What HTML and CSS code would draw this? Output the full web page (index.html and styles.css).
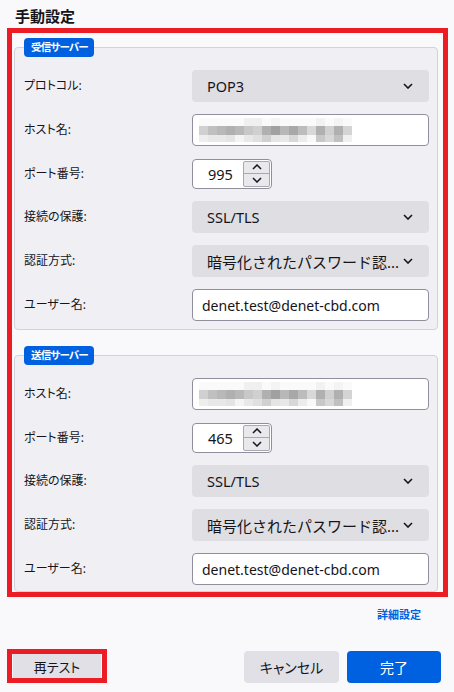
FILE: index.html
```html
<!DOCTYPE html>
<html lang="ja">
<head>
<meta charset="utf-8">
<title>手動設定</title>
<link rel="stylesheet" href="styles.css">
</head>
<body>
<div class="title">手動設定</div>
<div class="annot">
  <section class="group">
    <div class="legend">受信サーバー</div>
    <div class="rows">
      <div class="label">プロトコル:</div>
      <div class="select"><span>POP3</span><svg class="chev" width="10" height="6" viewBox="0 0 10 6"><polyline points="1,1 5,5 9,1" fill="none" stroke="#15141a" stroke-width="1.6"/></svg></div>
      <div class="label">ホスト名:</div>
      <div class="input"><div class="mosaic"></div></div>
      <div class="label">ポート番号:</div>
      <div class="portrow"><div class="port"><span class="num">995</span><div class="spin"><div class="sbtn"><svg width="10" height="6" viewBox="0 0 10 6"><polyline points="1,5 5,1 9,5" fill="none" stroke="#15141a" stroke-width="1.5"/></svg></div><div class="sbtn"><svg width="10" height="6" viewBox="0 0 10 6"><polyline points="1,1 5,5 9,1" fill="none" stroke="#15141a" stroke-width="1.5"/></svg></div></div></div></div>
      <div class="label">接続の保護:</div>
      <div class="select"><span>SSL/TLS</span><svg class="chev" width="10" height="6" viewBox="0 0 10 6"><polyline points="1,1 5,5 9,1" fill="none" stroke="#15141a" stroke-width="1.6"/></svg></div>
      <div class="label">認証方式:</div>
      <div class="select"><span class="jp">暗号化されたパスワード認...</span><svg class="chev" width="10" height="6" viewBox="0 0 10 6"><polyline points="1,1 5,5 9,1" fill="none" stroke="#15141a" stroke-width="1.6"/></svg></div>
      <div class="label">ユーザー名:</div>
      <div class="input"><span class="val">denet.test@denet-cbd.com</span></div>
    </div>
  </section>
  <section class="group group2">
    <div class="legend">送信サーバー</div>
    <div class="rows">
      <div class="label">ホスト名:</div>
      <div class="input"><div class="mosaic"></div></div>
      <div class="label">ポート番号:</div>
      <div class="portrow"><div class="port"><span class="num">465</span><div class="spin"><div class="sbtn"><svg width="10" height="6" viewBox="0 0 10 6"><polyline points="1,5 5,1 9,5" fill="none" stroke="#15141a" stroke-width="1.5"/></svg></div><div class="sbtn"><svg width="10" height="6" viewBox="0 0 10 6"><polyline points="1,1 5,5 9,1" fill="none" stroke="#15141a" stroke-width="1.5"/></svg></div></div></div></div>
      <div class="label">接続の保護:</div>
      <div class="select"><span>SSL/TLS</span><svg class="chev" width="10" height="6" viewBox="0 0 10 6"><polyline points="1,1 5,5 9,1" fill="none" stroke="#15141a" stroke-width="1.6"/></svg></div>
      <div class="label">認証方式:</div>
      <div class="select"><span class="jp">暗号化されたパスワード認...</span><svg class="chev" width="10" height="6" viewBox="0 0 10 6"><polyline points="1,1 5,5 9,1" fill="none" stroke="#15141a" stroke-width="1.6"/></svg></div>
      <div class="label">ユーザー名:</div>
      <div class="input"><span class="val">denet.test@denet-cbd.com</span></div>
    </div>
  </section>
</div>
<div class="adv"><a class="link">詳細設定</a></div>
<div class="footer">
  <div class="annot-btn"><div class="btn retest">再テスト</div></div>
  <div class="spacer"></div>
  <div class="btn cancel">キャンセル</div>
  <div class="btn primary">完了</div>
</div>
</body>
</html>
```
FILE: styles.css
```css
* { box-sizing: border-box; }
html, body { margin: 0; padding: 0; }
body {
  width: 454px;
  height: 692px;
  background: #f9f9fb;
  font-family: "Noto Sans", "Noto Sans CJK JP", sans-serif;
  font-feature-settings: "palt";
  color: #15141a;
  overflow: hidden;
}
.title {
  padding: 6px 15px 2px;
  font-size: 15px;
  line-height: 20px;
  font-weight: 700;
}
.annot {
  margin: 0 6px 0 7px;
  border: 5px solid #ec1c24;
  padding: 14px 5px 0 2px;
}
.group {
  border: 1px solid #d2d2d8;
  border-radius: 4px;
  background: #f0f0f4;
  padding: 0 8px 8px 9px;
  display: flex;
  flex-direction: column;
  align-items: flex-start;
}
.group2 {
  margin-top: 25px;
  padding-bottom: 6px;
}
.legend {
  margin-top: -10px;
  height: 19px;
  line-height: 19px;
  padding: 0 6px 0 7px;
  background: #0061e0;
  color: #fff;
  font-size: 10.5px;
  letter-spacing: -0.8px;
  font-weight: 700;
  border-radius: 4px;
}
.rows {
  align-self: stretch;
  margin-top: 13px;
  display: grid;
  grid-template-columns: 168px 1fr;
  row-gap: 12px;
  align-items: center;
}
.label {
  font-size: 12px;
  line-height: 16px;
}
.select {
  height: 32px;
  border-radius: 4px;
  background: #dedee3;
  display: flex;
  align-items: center;
  justify-content: space-between;
  padding: 0 16px 0 15px;
  font-size: 14.5px;
}
.jp {
  font-size: 15px;
  font-feature-settings: normal;
  white-space: nowrap;
}
.input {
  height: 32px;
  border: 1px solid #8f8f9d;
  border-radius: 4px;
  background: #fff;
  display: flex;
  align-items: center;
  padding: 0 9px;
  font-size: 14px;
}
.val { white-space: nowrap; }
.mosaic {
  width: 153px;
  height: 24px;
  margin-left: -3px;
  background-repeat: no-repeat;
  background-size: 153px 8px, 153px 9px, 153px 7px;
  background-position: 0 0, 0 8px, 0 17px;
  background-image:
    linear-gradient(90deg, #fafafa 0 45px, #f0f0f0 45px 63px, #fafafa 63px 72px, #f4f4f4 72px 81px, #fafafa 81px 117px, #f2f2f2 117px 126px, #fafafa 126px 135px, #f4f4f4 135px 144px, #fafafa 144px 153px),
    linear-gradient(90deg, #d0d0d0 0 9px, #c0c0c0 9px 18px, #b8b8b8 18px 27px, #b0b0b0 27px 36px, #b8b8b8 36px 45px, #c8c8c8 45px 54px, #d0d0d0 54px 63px, #b0b0b0 63px 72px, #a0a0a0 72px 81px, #b8b8b8 81px 90px, #a8a8a8 90px 99px, #bcbcbc 99px 108px, #d8d8d8 108px 117px, #b0b0b0 117px 126px, #d0d0d0 126px 135px, #b0b0b0 135px 144px, #d4d4d4 144px 153px),
    linear-gradient(90deg, #eeeeee 0 9px, #e8e8e8 9px 27px, #e4e4e4 27px 36px, #f4f4f4 36px 45px, #e8e8e8 45px 54px, #e0e0e0 54px 63px, #d0d0d0 63px 72px, #e4e4e4 72px 81px, #e8e8e8 81px 90px, #d8d8d8 90px 99px, #ececec 99px 108px, #f8f8f8 108px 117px, #c8c8c8 117px 126px, #d8d8d8 126px 135px, #c0c0c0 135px 144px, #f0f0f0 144px 153px);
}
.portrow {
  height: 31px;
  display: flex;
  align-items: center;
}
.port {
  width: 80px;
  height: 30px;
  border: 1px solid #8f8f9d;
  border-radius: 4px;
  background: #fff;
  display: flex;
  align-items: stretch;
  padding: 1px 1px 1px 0;
}
.num {
  flex: 1;
  display: flex;
  align-items: center;
  padding-left: 15px;
  font-size: 14.5px;
}
.spin {
  width: 27px;
  display: flex;
  flex-direction: column;
  border: 1px solid #a8a8b0;
  border-radius: 2px;
  background: #e9e9ed;
}
.sbtn {
  flex: 1;
  display: flex;
  align-items: center;
  justify-content: center;
}
.sbtn + .sbtn { border-top: 1px solid #a8a8b0; }
.adv {
  text-align: right;
  padding-right: 33px;
  margin-top: 8px;
  line-height: 16px;
}
.link {
  color: #0061e0;
  font-size: 11px;
  font-weight: 700;
}
.footer {
  margin-top: 26px;
  display: flex;
  align-items: flex-end;
  padding: 0 13px 0 7px;
}
.spacer { flex: 1; }
.annot-btn {
  width: 100px;
  height: 34px;
  border: 5px solid #ec1c24;
  padding: 0 1px;
}
.btn {
  height: 32px;
  border-radius: 4px;
  display: flex;
  align-items: center;
  justify-content: center;
  font-size: 14px;
  background: #e0e0e6;
}
.retest {
  height: 24px;
  border-radius: 0;
  font-size: 13px;
}
.cancel { width: 95px; margin-right: 8px; }
.primary { width: 94px; background: #0061e0; color: #fff; }
```
